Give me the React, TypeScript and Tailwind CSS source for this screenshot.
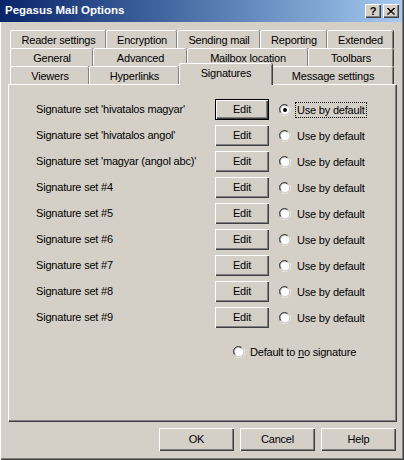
import clsx from 'clsx';

const tabRows = [
  [
    { label: 'Reader settings', w: 96 },
    { label: 'Encryption', w: 71 },
    { label: 'Sending mail', w: 83 },
    { label: 'Reporting', w: 67 },
    { label: 'Extended', w: 66 },
  ],
  [
    { label: 'General', w: 83 },
    { label: 'Advanced', w: 94 },
    { label: 'Mailbox location', w: 121 },
    { label: 'Toolbars', w: 85 },
  ],
  [
    { label: 'Viewers', w: 79 },
    { label: 'Hyperlinks', w: 90 },
    { label: 'Signatures', w: 93, active: true },
    { label: 'Message settings', w: 121 },
  ],
];

const sigs = [
  "Signature set 'hivatalos magyar'",
  "Signature set 'hivatalos angol'",
  "Signature set 'magyar (angol abc)'",
  'Signature set #4',
  'Signature set #5',
  'Signature set #6',
  'Signature set #7',
  'Signature set #8',
  'Signature set #9',
];

// win2k radio button
function Radio({ checked }: { checked?: boolean }) {
  return (
    <svg width="12" height="12" viewBox="0 0 12 12" className="shrink-0">
      <path d="M1 8.5 A5.5 5.5 0 0 1 8.5 1" fill="none" stroke="#808080" strokeWidth="1" />
      <path d="M2 8.5 A4.5 4.5 0 0 1 8.5 2" fill="none" stroke="#404040" strokeWidth="1" />
      <path d="M3.5 11 A5.5 5.5 0 0 0 11 3.5" fill="none" stroke="#ffffff" strokeWidth="1" />
      <path d="M3.5 10 A4.5 4.5 0 0 0 10 3.5" fill="none" stroke="#d4d0c8" strokeWidth="1" />
      <circle cx="6" cy="6" r="4" fill="#ffffff" />
      {checked && <circle cx="6" cy="6" r="2" fill="#000000" />}
    </svg>
  );
}

function Button({ children, def, className }: { children: React.ReactNode; def?: boolean; className?: string }) {
  return (
    <div
      className={clsx(
        'flex items-center justify-center bg-[#d4d0c8] text-black',
        def
          ? 'border border-black shadow-[inset_1px_1px_#ffffff,inset_-1px_-1px_#404040,inset_-2px_-2px_#808080]'
          : 'shadow-[inset_1px_1px_#ffffff,inset_-1px_-1px_#404040,inset_-2px_-2px_#808080]',
        className
      )}
    >
      {children}
    </div>
  );
}

export default function App() {
  return (
    <div className="w-[404px] h-[460px] bg-[#d4d0c8] flex flex-col text-[11px] tracking-[-0.2px] text-black font-['Liberation_Sans',Arial,sans-serif] shadow-[inset_1px_0_#ffffff,inset_-1px_-1px_#404040,inset_-2px_-2px_#808080] overflow-hidden">
      {/* title bar */}
      <div className="h-[22px] mr-[2px] flex items-center justify-between pl-[5px] pr-[3px] bg-gradient-to-r from-[#0a246a] to-[#a6caf0]">
        <span className="text-white font-bold text-[11.5px] tracking-normal">Pegasus Mail Options</span>
        <div className="flex gap-[2px]">
          <Button className="w-[16px] h-[14px] font-bold text-[11px] tracking-normal">?</Button>
          <Button className="w-[16px] h-[14px]">
            <svg width="8" height="7" viewBox="0 0 8 7">
              <path d="M0 0 L7 6.5 M1 0 L8 6.5 M7 0 L0 6.5 M8 0 L1 6.5" stroke="#000" strokeWidth="1" />
            </svg>
          </Button>
        </div>
      </div>

      <div className="flex-1 flex flex-col pl-[8px] pr-[8px] pt-[8px]">
        {/* tabs */}
        <div className="flex flex-col pl-[2px]">
          {tabRows.map((row, ri) => (
            <div key={ri} className="flex h-[18px] items-end">
              {row.map((t) => (
                <div
                  key={t.label}
                  style={{ width: t.w }}
                  className={clsx(
                    'flex items-center justify-center rounded-t-[2px] bg-[#d4d0c8] border-t border-l border-white shadow-[inset_-1px_0_#808080,1px_0_#404040]',
                    t.active
                      ? 'relative z-10 h-[22px] -mb-[1px] pb-[3px]'
                      : 'h-[18px] pt-[1px]'
                  )}
                >
                  {t.label}
                </div>
              ))}
            </div>
          ))}
        </div>

        {/* panel */}
        <div className="h-[337px] w-[388px] border-t border-l border-white shadow-[inset_-1px_-1px_#808080,1px_1px_#404040] flex flex-col pl-[27px] pt-[14px]">
          <div className="flex flex-col gap-[5px]">
            {sigs.map((s, i) => (
              <div key={s} className="flex items-center h-[21px]">
                <span className="w-[179px]">{s}</span>
                <Button def={i === 0} className="w-[54px] h-[21px]">Edit</Button>
                <div className="flex items-center ml-[10px] gap-[5px]">
                  <Radio checked={i === 0} />
                  <span
                    className={clsx(
                      'px-[1px] leading-[14px]',
                      i === 0 ? 'outline-1 outline-dotted outline-black' : ''
                    )}
                  >
                    Use by default
                  </span>
                </div>
              </div>
            ))}
          </div>
          <div className="flex items-center mt-[16px] pl-[197px] gap-[5px]">
            <Radio />
            <span>
              Default to <span className="underline">n</span>o signature
            </span>
          </div>
        </div>

        {/* buttons */}
        <div className="flex justify-end gap-[6px] mt-[7px] pr-[0px]">
          <Button className="w-[75px] h-[23px]">OK</Button>
          <Button className="w-[75px] h-[23px]">Cancel</Button>
          <Button className="w-[75px] h-[23px]">Help</Button>
        </div>
      </div>
    </div>
  );
}
